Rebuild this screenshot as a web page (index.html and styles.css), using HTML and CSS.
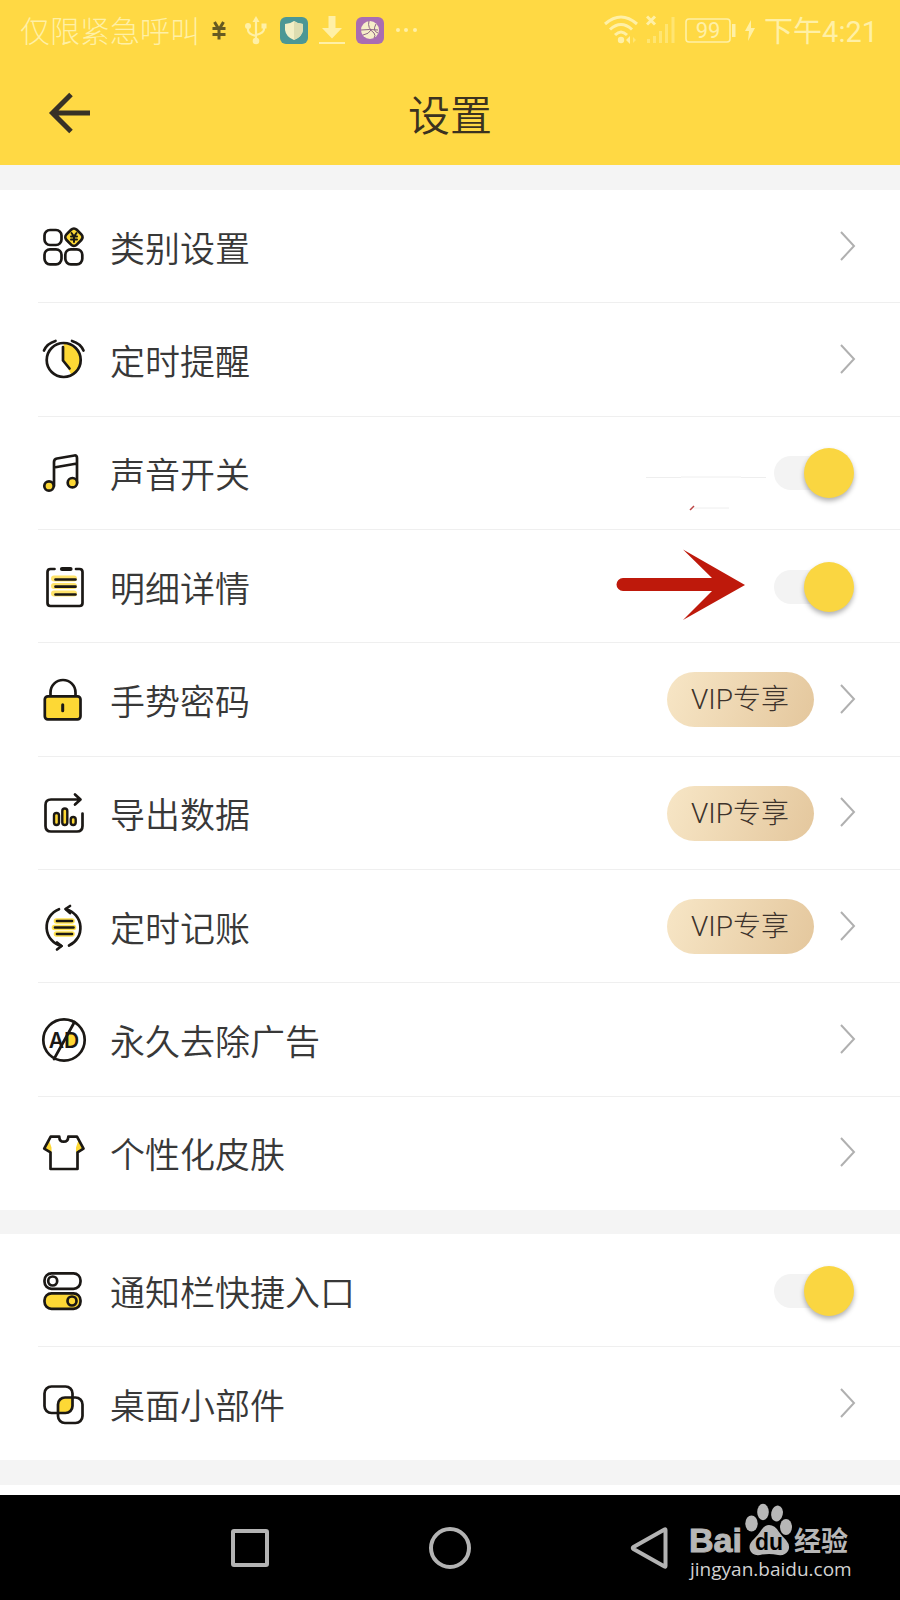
FILE: index.html
```html
<!DOCTYPE html>
<html lang="zh-CN">
<head>
<meta charset="utf-8">
<meta name="viewport" content="width=device-width, initial-scale=1">
<title>设置</title>
<link rel="stylesheet" href="styles.css">
</head>
<body>
<div class="app">
  <header class="top">
    <div class="status">
      <div class="status-group status-left">
        <span class="carrier">仅限紧急呼叫</span>
        <svg width="18" height="28" viewBox="0 0 18 28" fill="none" stroke="#665a22" stroke-width="3"><path d="M4.500 6 9 13.500 13.500 6M2.500 12.500h13M2.500 18.500h13M9 13v10.500"/></svg>
        <svg width="32" height="30" viewBox="0 0 32 30" fill="none" stroke="#fff0a6" stroke-width="2.200"><path d="M18 4v21M10 11v4q0 4 8 6M26 11v3q0 4-8 6"/><path d="m18 1 3.500 6h-7z" fill="#fff0a6" stroke="none"/><g fill="#fff0a6" stroke="none"><circle cx="10" cy="11" r="3"/><path d="M23.500 8.500h5v5h-5z"/><circle cx="18" cy="26" r="3.300"/></g></svg>
        <svg width="28" height="28" viewBox="0 0 28 28"><rect y="1" width="28" height="27" rx="6" fill="#4c9795"/><path d="M14 5q4 3 9 3v6q-1 7-9 10-8-3-9-10V8q5 0 9-3z" fill="#f3efc5"/><path d="M14 5q4 3 9 3v6q-1 7-9 10z" fill="#ddddb1"/></svg>
        <svg width="28" height="30" viewBox="0 0 28 30" fill="#fff0a6"><path d="M10.500 1h7v12H24L14 23.500 4 13h6.500zM1 27h26v2H1z"/></svg>
        <svg width="28" height="28" viewBox="0 0 28 28"><rect y="1" width="28" height="27" rx="6" fill="#a96db2"/><circle cx="14" cy="14" r="9" fill="#f6edc9"/><path d="M13 5q-2 7 5 12 2 3 0 5M5 14q9-1 17 0M7 19q6-1 8-5M20 8q-4 7 2 9" fill="none" stroke="#8d6485" stroke-width="1"/></svg>
        <svg width="24" height="28" viewBox="0 0 24 28" fill="#fff0a6"><circle cx="4" cy="14" r="2"/><circle cx="12" cy="14" r="2"/><circle cx="21" cy="14" r="2"/></svg>
      </div>
      <div class="status-group">
        <svg width="34" height="30" viewBox="0 0 34 30" fill="none" stroke="#fff0a6" stroke-width="3"><path d="M1 9q16-14 32 0M6 14.500q11-10 22 0M11 20q6-6 12 0"/><circle cx="17" cy="25" r="3.200" fill="#fff0a6" stroke="none"/><path d="m26 21-4 4 4 4z" fill="#fff0a6" stroke="none"/><path d="m29 22 3 3-3 3z" fill="#ffe673" stroke="none"/></svg>
        <svg width="30" height="30" viewBox="0 0 30 30" fill="none"><path d="m1 1.500 8 8m0-8-8 8" stroke="#fff0a6" stroke-width="3"/><path d="M2.500 24v4M8.500 21v7M14.500 16v12M20.500 9v19M27 2v26" stroke="#ffe572" stroke-width="3"/></svg>
        <svg class="battery" width="52" height="28" viewBox="0 0 52 28"><rect x="2" y="3" width="44" height="23" rx="3" fill="none" stroke="#fff0a6" stroke-width="1.600"/><path d="M48 8h3.500v13H48z" fill="#fff0a6"/><text x="24" y="22" text-anchor="middle">99</text></svg>
        <svg width="12" height="28" viewBox="0 0 12 28" fill="#fff0a6"><path d="M7 4 1 15h4L4 25l7-13H7z"/></svg>
        <span class="clock">下午4:21</span>
      </div>
    </div>
    <div class="bar">
      <button class="back" type="button" aria-label="返回"><svg width="44" height="44" viewBox="0 0 44 44" fill="none" stroke="#383126" stroke-width="5"><path d="M23 3.500 4.500 22 23 40.500M4 22h38"/></svg></button>
      <h1 class="title">设置</h1>
    </div>
  </header>

  <main>
    <div class="list list-main">
      <a class="row" href="#category">
        <svg class="icon" viewBox="0 0 48 48"><rect x="6.500" y="7" width="17" height="15" rx="5.500"/><rect x="6.500" y="26.300" width="17" height="15" rx="5.500"/><rect x="27.300" y="26.300" width="17" height="15" rx="5.500"/><rect class="y" x="28.700" y="7" width="14.500" height="14.500" rx="4" transform="rotate(45 36 14.200)"/><path d="m33.500 10 2.500 3.500 2.500-3.500M33 13.500h6M33 16.500h6M36 13v6" stroke-width="2"/></svg>
        <span class="name">类别设置</span>
        <svg class="chev" viewBox="0 0 16 32"><path d="m1 1 13 14L1 29"/></svg>
      </a>
      <a class="row" href="#reminder">
        <svg class="icon" viewBox="0 0 48 48"><path class="yf" d="M25.500 7a17 17 0 0 1 8 32L26 25z"/><circle cx="25.700" cy="24" r="17"/><path d="M25 11v13.500l6.500 8M6 14.500Q9 7.500 17.500 5M34 5q8.500 2.500 11.500 9.500"/></svg>
        <span class="name">定时提醒</span>
        <svg class="chev" viewBox="0 0 16 32"><path d="m1 1 13 14L1 29"/></svg>
      </a>
      <label class="row">
        <svg class="icon" viewBox="0 0 48 48"><path d="M16 37V13q0-3 3-3.500L36.500 6.500q2.500-.3 2.500 2.500V34M16 18.500l23-4"/><circle class="y" cx="11" cy="37" r="4.700"/><circle class="y" cx="34.400" cy="33.700" r="4.700"/></svg>
        <span class="name">声音开关</span>
        <input class="switch" type="checkbox" checked>
      </label>
      <label class="row">
        <svg class="icon" viewBox="0 0 48 48"><path d="M16 15.500h20M16 23h20M16 30.500h20" stroke="#ffe36a" stroke-width="6"/><path d="M16.500 6h-4Q9.500 6 9.500 9v31q0 3 3 3h29q3 0 3-3V9q0-3-3-3H38"/><path d="M24 6h8.500" stroke-width="4.200"/><path d="M17.500 16.500h20M17.500 23.700h20M17.500 31.500h20"/></svg>
        <span class="name">明细详情</span>
        <svg class="marker" viewBox="0 0 130 172" aria-hidden="true"><path d="M30 28.500h35M65 28h60M125 28.500h25" stroke="#eee"/><path d="M78 59h35" stroke="#eee"/><path d="m74 61 4-4" stroke="#b44" stroke-width="1.500"/><path fill="#be190b" d="M7 129h89L67 100.500l62 35.500-62 35 29-29H7a6.500 6.500 0 0 1 0-13z"/></svg>
        <input class="switch" type="checkbox" checked>
      </label>
      <a class="row" href="#gesture">
        <svg class="icon" viewBox="0 0 48 48"><path d="M12.500 20v-3.500a12.500 12.500 0 0 1 25 0V20"/><rect class="y" x="6.800" y="20.300" width="35.700" height="23" rx="3"/><path d="M24.700 28.700v6" stroke-width="3"/></svg>
        <span class="name">手势密码</span>
        <span class="vip">VIP专享</span>
        <svg class="chev" viewBox="0 0 16 32"><path d="m1 1 13 14L1 29"/></svg>
      </a>
      <a class="row" href="#export">
        <svg class="icon" viewBox="0 0 48 48"><path d="M42 10.500H13q-5.500 0-5.500 5.500v21q0 5.500 5.500 5.500h26q5.500 0 5.500-5.500V24.500M37 5.500l5.500 5-5.500 5"/><g stroke-width="2.400"><rect class="y" x="16" y="24" width="5" height="12" rx="2.500"/><rect class="y" x="24.300" y="19.500" width="5" height="16.500" rx="2.500"/><rect class="y" x="32.700" y="28" width="5" height="8" rx="2.500"/></g></svg>
        <span class="name">导出数据</span>
        <span class="vip">VIP专享</span>
        <svg class="chev" viewBox="0 0 16 32"><path d="m1 1 13 14L1 29"/></svg>
      </a>
      <a class="row" href="#auto">
        <svg class="icon" viewBox="0 0 48 48"><path d="M18.500 18h15.500M16.500 24.500h19M18.500 31h15.500" stroke="#ffe14d" stroke-width="5.600"/><path d="M19 18h15M17 24.500h18.500M19 31h15"/><path d="M21 6.200a19.300 19.300 0 0 0 2.500 36.800M31 42.500A19.300 19.300 0 0 0 28 6.200"/><path d="m19 39.500 4.500 3.500-4.500 3.500M32 3l-4.500 3 4.500 4"/></svg>
        <span class="name">定时记账</span>
        <span class="vip">VIP专享</span>
        <svg class="chev" viewBox="0 0 16 32"><path d="m1 1 13 14L1 29"/></svg>
      </a>
      <a class="row" href="#ads">
        <svg class="icon" viewBox="0 0 48 48"><path class="yf" d="M29 18h6q5 1 5 6.500T35 31h-6z"/><text class="ad" x="26" y="31.500" text-anchor="middle">AD</text><circle cx="26" cy="24" r="20.700"/><path d="M36.500 6 16 43"/></svg>
        <span class="name">永久去除广告</span>
        <svg class="chev" viewBox="0 0 16 32"><path d="m1 1 13 14L1 29"/></svg>
      </a>
      <a class="row" href="#skin">
        <svg class="icon" viewBox="0 0 48 48"><path class="yf" d="m11 11-5 9 7.500 3.500v-5zM40.500 11l5 9-7.500 3.500v-5z"/><path d="M12.700 7.700h8.600q0 5 4.400 5t4.600-5H39l6.500 12-6 3.600V40H12.500V23.300l-6.300-3.600z"/></svg>
        <span class="name">个性化皮肤</span>
        <svg class="chev" viewBox="0 0 16 32"><path d="m1 1 13 14L1 29"/></svg>
      </a>
    </div>
    <div class="list list-extra">
      <label class="row">
        <svg class="icon" viewBox="0 0 48 48"><rect x="6.500" y="6.300" width="36" height="15.500" rx="7"/><circle cx="14.700" cy="14" r="4.500"/><rect class="y" x="6.500" y="26.300" width="36" height="15.500" rx="7"/><circle cx="34" cy="34" r="4.500"/></svg>
        <span class="name">通知栏快捷入口</span>
        <input class="switch" type="checkbox" checked>
      </label>
      <a class="row" href="#widget">
        <svg class="icon" viewBox="0 0 48 48"><path class="yf" d="M34.500 17.500V27q0 6-6 6H20v-9q0-6.500 6-6.500z"/><rect x="6.500" y="6.500" width="28" height="26.500" rx="7"/><rect x="20" y="17.500" width="24.500" height="25.500" rx="7"/></svg>
        <span class="name">桌面小部件</span>
        <svg class="chev" viewBox="0 0 16 32"><path d="m1 1 13 14L1 29"/></svg>
      </a>
    </div>
    <div class="list list-next"></div>
  </main>

  <nav class="nav">
    <button type="button" aria-label="最近任务"><svg width="44" height="44" viewBox="0 0 44 44"><rect x="5" y="5" width="34" height="34" rx="1"/></svg></button>
    <button type="button" aria-label="主页"><svg width="44" height="44" viewBox="0 0 44 44"><circle cx="22" cy="22" r="19"/></svg></button>
    <button type="button" aria-label="后退"><svg width="44" height="44" viewBox="0 0 44 44"><path d="M37.500 4v36q0 1-1 .5L5.500 23q-1.500-1 0-2L36.500 3.500q1-.5 1 .5z"/></svg></button>
    <div class="brand">
      <svg class="brand-logo" viewBox="0 0 162 54" role="img" aria-label="Bai du 经验">
        <text class="bai" x="-1" y="49">Bai</text>
        <g><ellipse cx="61.500" cy="20.500" rx="6.200" ry="8"/><ellipse cx="73" cy="9" rx="5.800" ry="8.200"/><ellipse cx="87" cy="10.500" rx="5.800" ry="8" transform="rotate(12 87 10.500)"/><ellipse cx="96" cy="24" rx="6" ry="8"/><path d="M79 22q6 0 10 7 3 4 7 8 5 6 2 11-3 5-10 4-9-2-18 0-8 1-10-5-2-6 4-11 4-4 6-7 4-7 9-7z"/></g>
        <text class="du" x="79" y="47" text-anchor="middle">du</text>
        <text class="jy" x="104" y="48">经验</text>
      </svg>
      <span class="brand-url">jingyan.baidu.com</span>
    </div>
  </nav>
</div>
</body>
</html>
```
FILE: styles.css
```css
* { box-sizing: border-box; }

body {
  margin: 0;
  background: #f4f4f4;
  color: #383838;
  font-family: Roboto, "Noto Sans CJK SC", sans-serif;
  font-weight: 300;
}

svg { display: block; flex: none; }
button { padding: 0; border: 0; background: none; cursor: pointer; }

.app {
  min-height: 100vh;
  display: flex;
  flex-direction: column;
}

.top { height: 165px; background: #ffd944; }

.status {
  height: 60px;
  padding: 0 22px 0 20px;
  display: flex;
  align-items: center;
  justify-content: space-between;
  color: #fff0a6;
  font-size: 30px;
  line-height: 40px;
}
.status-group { display: flex; align-items: center; gap: 8px; }
.status-left { gap: 10px; }
.carrier, .clock { padding-top: 4px; }
.clock { font-size: 29px; font-weight: 400; }
.battery text { font: 400 22px Roboto, sans-serif; fill: #fff0a6; }

.bar {
  height: 105px;
  padding: 0 48px;
  display: grid;
  grid-template-columns: 44px 1fr 44px;
  align-items: center;
}
.title {
  margin: 0;
  font-size: 42px;
  line-height: 56px;
  font-weight: 350;
  font-family: "Noto Sans CJK SC", sans-serif;
  text-align: center;
  color: #3b3220;
}

.list {
  margin-top: 25px;
  display: grid;
  grid-auto-rows: 1fr;
  background: #fff;
}
.list-main { min-height: 1020px; }
.list-extra { min-height: 226px; margin-top: 24px; }
.list-next { min-height: 10px; }

.row {
  position: relative;
  min-height: 113px;
  padding: 0 44px 0 38px;
  display: flex;
  align-items: center;
  color: inherit;
  text-decoration: none;
  background: linear-gradient(#efefef, #efefef) 38px 100% / 100% 1px no-repeat;
}
.row:last-child { background: none; }

.icon {
  width: 48px;
  height: 48px;
  margin-right: 24px;
  overflow: visible;
  fill: none;
  stroke: #1b1815;
  stroke-width: 2.7px;
  stroke-linecap: round;
  stroke-linejoin: round;
}
.y { fill: #fdd835; }
.yf { fill: #fdd835; stroke: none; }
.ad { font: 600 21px Inter, sans-serif; fill: #1b1815; stroke: none; }

.name {
  flex: 1;
  font-family: "Noto Sans CJK SC", sans-serif;
  font-size: 35px;
  font-weight: 350;
  line-height: 48px;
}

.chev {
  width: 16px;
  height: 32px;
  fill: none;
  stroke: #b0b0b0;
  stroke-width: 2px;
}

.vip {
  margin-right: 26px;
  padding: 0 25px 0 24px;
  border-radius: 28px;
  background: linear-gradient(110deg, #f7e6c6, #e4c79d);
  color: #3d332c;
  font-size: 28px;
  line-height: 55px;
}

.switch {
  position: relative;
  width: 80px;
  height: 52px;
  margin: 0 2px 0 0;
  appearance: none;
  cursor: pointer;
}
.switch::before {
  content: "";
  position: absolute;
  inset: 9px 6px 9px 0;
  border-radius: 17px;
  background: #f3f3f3;
}
.switch::after {
  content: "";
  position: absolute;
  top: 1px;
  left: 0;
  width: 50px;
  height: 50px;
  border-radius: 50%;
  background: #fff;
  box-shadow: 0 3px 5px rgba(0, 0, 0, 0.3);
}
.switch:checked::after { left: 30px; background: #fad641; }

.marker {
  position: absolute;
  right: 154px;
  bottom: 22px;
  width: 130px;
  height: 172px;
  overflow: visible;
  pointer-events: none;
}

.nav {
  position: relative;
  flex: 1;
  min-height: 105px;
  display: flex;
  align-items: center;
  justify-content: center;
  gap: 156px;
  background: #000;
}
.nav button svg { fill: none; stroke: #b3b3b3; stroke-width: 4px; }

.brand {
  position: absolute;
  right: 48px;
  top: 8px;
  width: 162px;
  color: #d2d2d2;
}
.brand-logo { width: 162px; height: 54px; overflow: visible; fill: #b7b7b7; }
.bai { font: 700 34px "Liberation Sans", sans-serif; stroke: #b7b7b7; stroke-width: 1px; }
.du { font: 700 23px "Liberation Sans", sans-serif; fill: #000; }
.jy { font: 700 27px "Noto Sans CJK SC", sans-serif; }
.brand-url {
  display: block;
  font: 400 19px/24px "Open Sans", sans-serif;
  white-space: nowrap;
}
```
